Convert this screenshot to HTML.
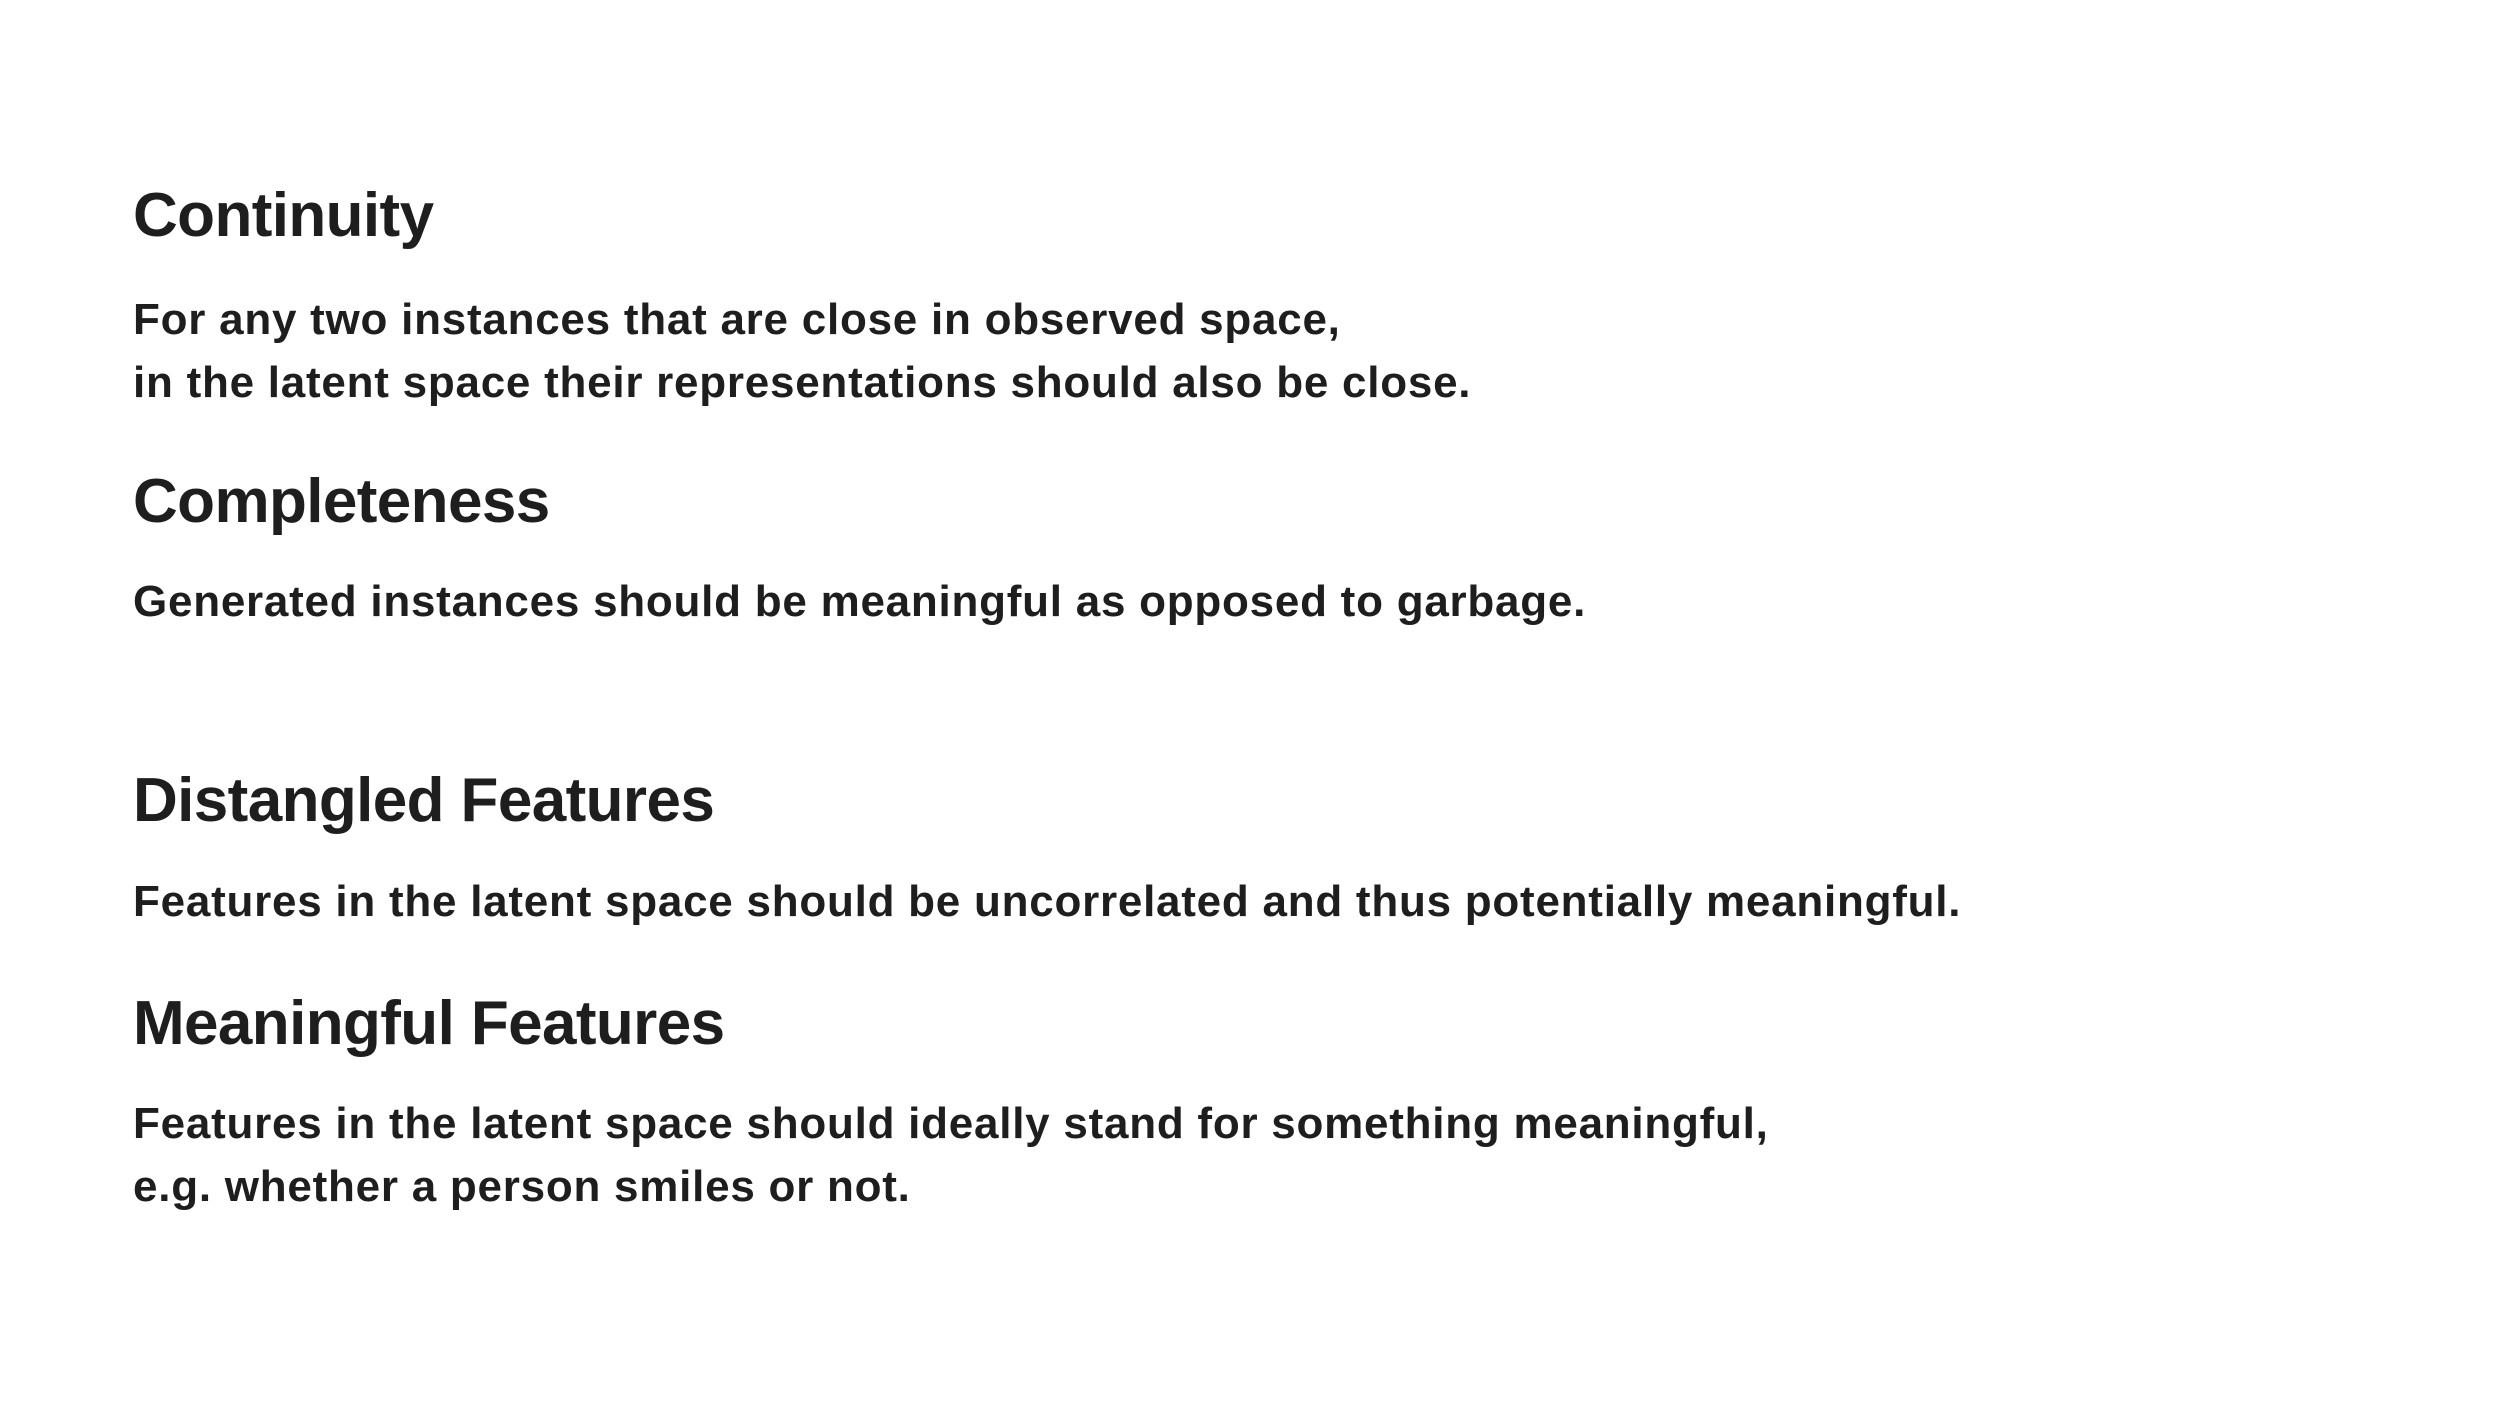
<!DOCTYPE html>
<html><head><meta charset="utf-8"><style>
html,body{margin:0;padding:0;background:#fff;}
body{width:2508px;height:1408px;position:relative;overflow:hidden;font-family:"Liberation Sans",sans-serif;font-weight:bold;color:#1e1e1e;}
.h{position:absolute;left:133px;font-size:62px;line-height:62px;white-space:nowrap;letter-spacing:-0.6px;}
.b{position:absolute;left:133px;font-size:44px;line-height:44px;white-space:nowrap;letter-spacing:0.75px;}
</style></head><body>
<div class="h" style="top:185px">Continuity</div>
<div class="b" style="top:298px">For any two instances that are close in observed space,</div>
<div class="b" style="top:361px">in the latent space their representations should also be close.</div>
<div class="h" style="top:471px">Completeness</div>
<div class="b" style="top:580px">Generated instances should be meaningful as opposed to garbage.</div>
<div class="h" style="top:770px">Distangled Features</div>
<div class="b" style="top:880px">Features in the latent space should be uncorrelated and thus potentially meaningful.</div>
<div class="h" style="top:993px">Meaningful Features</div>
<div class="b" style="top:1102px">Features in the latent space should ideally stand for something meaningful,</div>
<div class="b" style="top:1165px">e.g. whether a person smiles or not.</div>
</body></html>
